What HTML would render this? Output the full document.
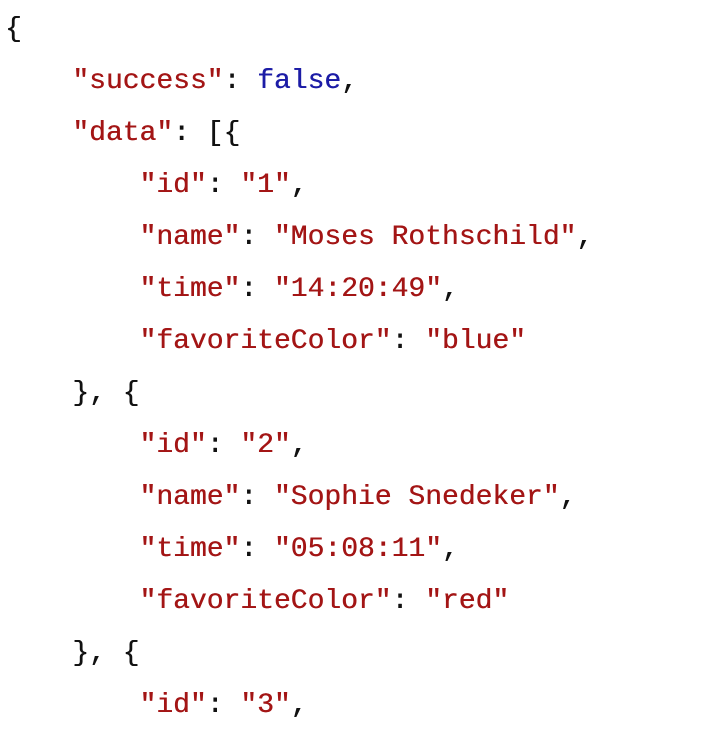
<!DOCTYPE html>
<html><head><meta charset="utf-8"><style>
html,body{margin:0;background:#fff;width:718px;height:738px;overflow:hidden}
pre{margin:0;position:absolute;left:5px;top:4px;font-family:"Liberation Mono",monospace;font-size:28px;line-height:52px;color:#111;font-weight:normal;text-shadow:0.4px 0 0 currentColor}
.s{color:#a31515}.b{color:#1c1ca6}
</style></head><body>
<pre>{
    <span class="s">"success"</span>: <span class="b">false</span>,
    <span class="s">"data"</span>: [{
        <span class="s">"id"</span>: <span class="s">"1"</span>,
        <span class="s">"name"</span>: <span class="s">"Moses Rothschild"</span>,
        <span class="s">"time"</span>: <span class="s">"14:20:49"</span>,
        <span class="s">"favoriteColor"</span>: <span class="s">"blue"</span>
    }, {
        <span class="s">"id"</span>: <span class="s">"2"</span>,
        <span class="s">"name"</span>: <span class="s">"Sophie Snedeker"</span>,
        <span class="s">"time"</span>: <span class="s">"05:08:11"</span>,
        <span class="s">"favoriteColor"</span>: <span class="s">"red"</span>
    }, {
        <span class="s">"id"</span>: <span class="s">"3"</span>,
</pre>
</body></html>
